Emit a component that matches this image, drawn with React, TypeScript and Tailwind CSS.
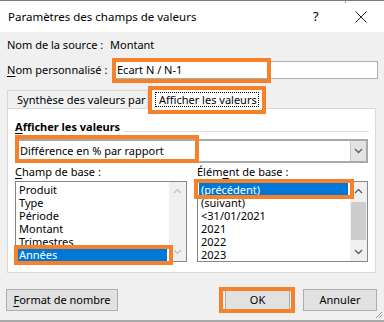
import React from "react";

const ORANGE = "border-4 border-[#f7802a] pointer-events-none absolute";

function Chevron({ up, light }: { up?: boolean; light?: boolean }) {
  return (
    <svg width="9" height="6" viewBox="0 0 9 6" className={up ? "" : "rotate-180"}>
      <path d="M1 5 L4.5 1.5 L8 5" fill="none" stroke={light ? "#c4c4c4" : "#606060"} strokeWidth="1.4" />
    </svg>
  );
}

function ListBox({
  items,
  selected,
  active,
  className,
  mark,
}: {
  items: string[];
  selected: number;
  active: boolean;
  className: string;
  mark: string;
}) {
  return (
    <div className={`relative flex h-[81px] border border-[#828790] bg-white ${className}`}>
      <div className="flex-1 pt-[1px] pl-[1px] pr-[2px]">
        {items.map((it, i) => (
          <div
            key={it}
            className={`h-[13px] leading-[13px] pl-[2px] ${i === selected ? "bg-[#0078d7] text-white" : ""}`}
          >
            {it}
          </div>
        ))}
      </div>
      <div className="w-[17px] bg-[#f0f0f0] flex flex-col items-center justify-between py-[6px]">
        <Chevron up light={!active} />
        {active && <div className="w-[15px] h-[38px] bg-[#cdcdcd] -mt-[2px]" />}
        <Chevron light={!active} />
      </div>
      <div className={`${ORANGE} ${mark}`} />
    </div>
  );
}

export default function App() {
  return (
    <div
      className="w-[384px] h-[322px] flex flex-col bg-white text-[11px] text-black overflow-hidden whitespace-nowrap"
      style={{ fontFamily: "'Noto Sans', 'Liberation Sans', sans-serif" }}
    >
      {/* window edge */}
      <div className="h-[2px] border-t border-[#7a7a7a] flex">
        <div className="ml-[345px] w-px h-[2px] bg-[#9a9a9a]" />
      </div>

      {/* title bar */}
      <div className="h-[30px] flex items-center pl-[8px]">
        <span className="text-[11.5px] flex-1">Paramètres des champs de valeurs</span>
        <span className="text-[13px] w-[42px]">?</span>
        <svg width="12" height="12" viewBox="0 0 12 12" className="mr-[17px]">
          <path d="M0.5 0.5 L11.5 11.5 M11.5 0.5 L0.5 11.5" stroke="#222" strokeWidth="1" />
        </svg>
      </div>

      {/* body */}
      <div className="flex-1 bg-[#f0f0f0] flex flex-col border-b-2 border-[#a9a9a9] relative">
        <div className="flex h-[16px] leading-[16px] mt-[5px] pl-[7px]">
          <span className="w-[103px]">Nom de la source :</span>
          <span>Montant</span>
        </div>

        <div className="flex items-center h-[18px] mt-[8px] pl-[7px]">
          <span className="w-[105px]">
            <span className="underline underline-offset-2">N</span>om personnalisé :
          </span>
          <div className="relative w-[266px] h-[18px] border border-[#adadad] bg-white pl-[4px] leading-[16px]">
            Ecart N / N-1
            <div className={`${ORANGE} -left-[1px] -top-[4px] w-[159px] h-[25px]`} />
          </div>
        </div>

        {/* tabs */}
        <div className="flex items-end h-[21px] mt-[8px] pl-[7px] relative z-10">
          <div className="h-[18px] w-[141px] border border-b-0 border-[#d9d9d9] pl-[9px] leading-[17px]">
            Synthèse des valeurs par
          </div>
          <div className="relative h-[22px] -mb-[1px] ml-[2px] w-[114px] bg-white border border-b-0 border-[#d9d9d9] px-[4px] pt-[4px]">
            <div className="h-[15px] leading-[13px] border border-dotted border-black px-[3px]">Afficher les valeurs</div>
            <div className={`${ORANGE} -left-[3px] -top-[2px] w-[118px] h-[28px]`} />
          </div>
        </div>

        {/* panel */}
        <div className="ml-[7px] w-[369px] h-[165px] bg-white border border-[#d9d9d9] px-[7px] flex flex-col">
          <div className="flex items-center h-[16px] mt-[10px]">
            <span className="font-bold">
              <span className="underline underline-offset-2">A</span>fficher les valeurs
            </span>
            <div className="flex-1 h-px bg-[#dcdcdc] ml-[4px] mt-[8px] mr-[-1px]" />
          </div>

          <div className="relative flex h-[24px] mt-[4px] border-2 border-[#a9a9a9] bg-white">
            <span className="flex-1 pl-[3px] leading-[20px]">Différence en % par rapport</span>
            <div className="w-[16px] bg-[#e3e3e3] border-l border-[#c8c8c8] flex items-center justify-center">
              <Chevron />
            </div>
            <div className={`${ORANGE} -left-[2px] -top-[6px] w-[184px] h-[28px]`} />
          </div>

          <div className="flex h-[16px] mt-[1px] leading-[16px]">
            <span className="w-[182px]">
              <span className="underline underline-offset-2">C</span>hamp de base :
            </span>
            <span>
              Élém<span className="underline underline-offset-2">e</span>nt de base :
            </span>
          </div>

          <div className="flex mt-[1px]">
            <ListBox
              items={["Produit", "Type", "Période", "Montant", "Trimestres", "Années"]}
              selected={5}
              active={false}
              className="w-[172px]"
              mark="-left-[2px] top-[63px] w-[159px] h-[20px]"
            />
            <ListBox
              items={["(précédent)", "(suivant)", "<31/01/2021", "2021", "2022", "2023"]}
              selected={0}
              active
              className="ml-[10px] w-[171px]"
              mark="-left-[4px] -top-[3px] w-[160px] h-[20px]"
            />
          </div>
        </div>

        {/* buttons */}
        <div className="flex items-center h-[22px] mt-[16px] pl-[6px]">
          <button className="h-[22px] w-[112px] bg-[#e1e1e1] border border-[#adadad] leading-[20px]">
            <span className="underline underline-offset-2">F</span>ormat de nombre
          </button>
          <button className="relative h-[22px] w-[65px] ml-[107px] bg-[#e1e1e1] border border-[#adadad] leading-[20px]">
            OK
            <div className={`${ORANGE} -left-[7px] -top-[3px] w-[76px] h-[26px]`} />
          </button>
          <button className="h-[22px] w-[74px] ml-[13px] bg-[#e1e1e1] border border-[#adadad] leading-[20px]">
            Annuler
          </button>
        </div>

        <svg width="8" height="8" viewBox="0 0 8 8" className="absolute right-[1px] bottom-[1px]">
          <path d="M7 1 L1 7 M7 4 L4 7" stroke="#9a9a9a" strokeWidth="1" />
        </svg>
      </div>
    </div>
  );
}
